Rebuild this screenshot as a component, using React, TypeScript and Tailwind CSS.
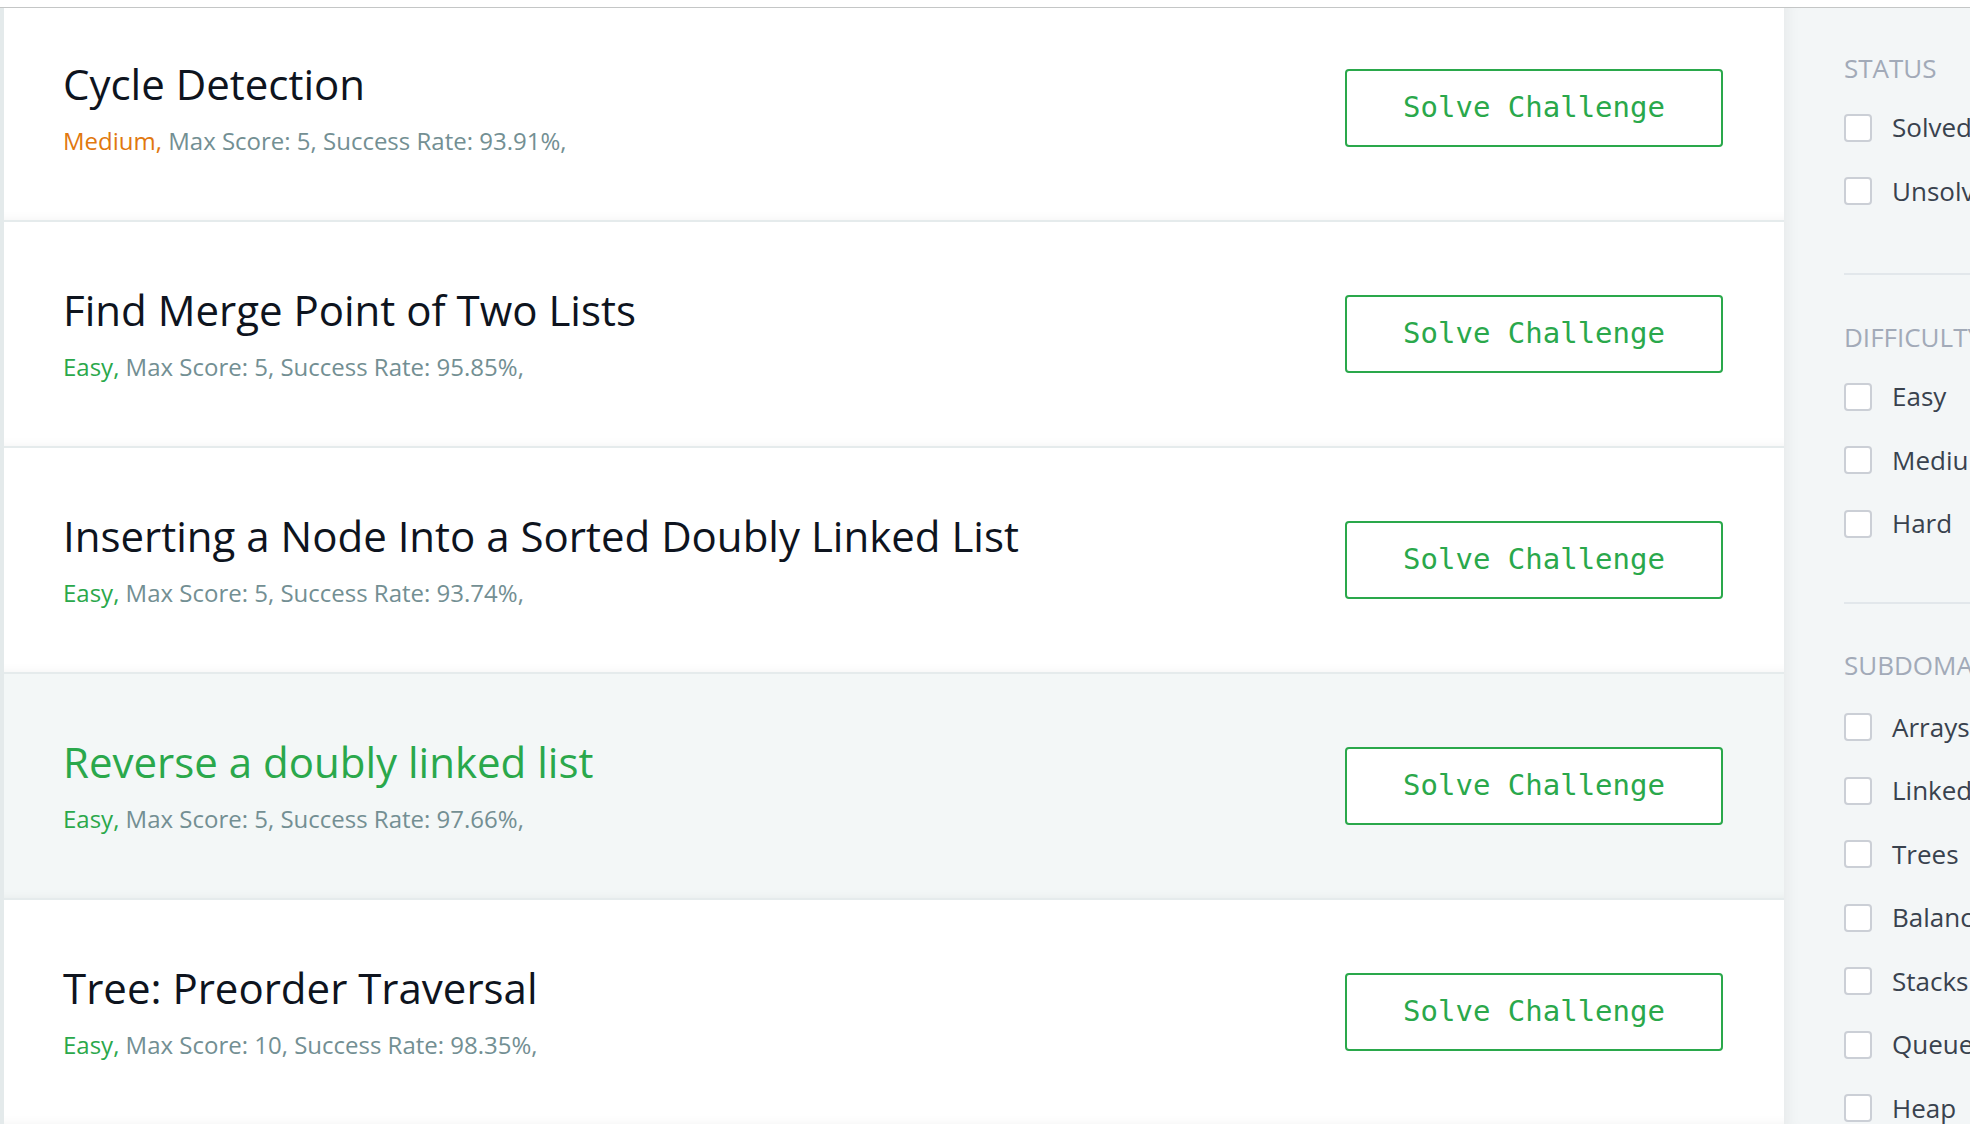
import React from "react";

const challenges = [
  { title: "Cycle Detection", difficulty: "Medium", score: 5, rate: "93.91%" },
  { title: "Find Merge Point of Two Lists", difficulty: "Easy", score: 5, rate: "95.85%" },
  { title: "Inserting a Node Into a Sorted Doubly Linked List", difficulty: "Easy", score: 5, rate: "93.74%" },
  { title: "Reverse a doubly linked list", difficulty: "Easy", score: 5, rate: "97.66%", active: true },
  { title: "Tree: Preorder Traversal", difficulty: "Easy", score: 10, rate: "98.35%" },
];

const filters = [
  {
    name: "Status",
    items: ["Solved", "Unsolved"],
    pad: "pt-[42px] pb-[50px] border-b-2 border-[#e2e7eb]",
    gap: "mt-[10px]",
  },
  {
    name: "Difficulty",
    items: ["Easy", "Medium", "Hard"],
    pad: "pt-[44px] pb-[46px] border-b-2 border-[#e2e7eb]",
    gap: "mt-[10px]",
  },
  {
    name: "Subdomains",
    items: ["Arrays", "Linked Lists", "Trees", "Balanced Trees", "Stacks", "Queues", "Heap"],
    pad: "pt-[43px]",
    gap: "mt-[13px]",
  },
];

function ChallengeRow({ c }) {
  return (
    <div
      className={
        "flex items-center justify-between h-[226px] border-b-2 border-[#e5ebec] pl-[59px] pr-[61px] shadow-[inset_0_-12px_12px_-12px_rgba(0,0,0,0.05)] " +
        (c.active ? "bg-[#f3f7f7]" : "bg-white")
      }
    >
      <div>
        <h4
          className={
            "text-[42px] leading-[50px] " + (c.active ? "text-[#2aa84b]" : "text-[#0e141e]")
          }
        >
          {c.title}
        </h4>
        <div className="mt-[16px] text-[24px] leading-[32px] text-[#738f93]">
          <span className={c.difficulty === "Medium" ? "text-[#e1780e]" : "text-[#2aa84b]"}>
            {c.difficulty},
          </span>{" "}
          Max Score: {c.score}, Success Rate: {c.rate},
        </div>
      </div>
      <button className="w-[378px] h-[78px] border-2 border-[#2aa84b] rounded-[4px] bg-white text-[#2aa84b] font-['DejaVu_Sans_Mono',monospace] text-[29px]">
        Solve Challenge
      </button>
    </div>
  );
}

export default function App() {
  return (
    <div className="w-[1970px] h-[1124px] overflow-hidden bg-white font-['Open_Sans',sans-serif]">
      <div className="h-[8px] border-b border-[#c4c6c6]" />
      <div className="flex h-[1116px]">
        <div className="w-[1784px] shrink-0 overflow-hidden bg-[#e4eaeb] pl-[4px]">
          <div className="-mt-[12px]">
            {challenges.map((c) => (
              <ChallengeRow key={c.title} c={c} />
            ))}
          </div>
        </div>
        <aside className="flex-1 overflow-hidden whitespace-nowrap bg-[#f3f6f7] pl-[60px] shadow-[inset_14px_0_14px_-10px_rgba(0,0,0,0.05)]">
          {filters.map((f) => (
            <div key={f.name} className={f.pad}>
              <div className="h-[36px] leading-[36px] text-[26px] uppercase text-[#a2aab8]">
                {f.name}
              </div>
              <div className={f.gap}>
                {f.items.map((it) => (
                  <label key={it} className="flex items-center h-[63.5px]">
                    <span className="w-[28px] h-[28px] shrink-0 rounded-[4px] border-2 border-[#cbcfd6] bg-white" />
                    <span className="ml-[20px] text-[26px] text-[#39424e]">{it}</span>
                  </label>
                ))}
              </div>
            </div>
          ))}
        </aside>
      </div>
    </div>
  );
}
